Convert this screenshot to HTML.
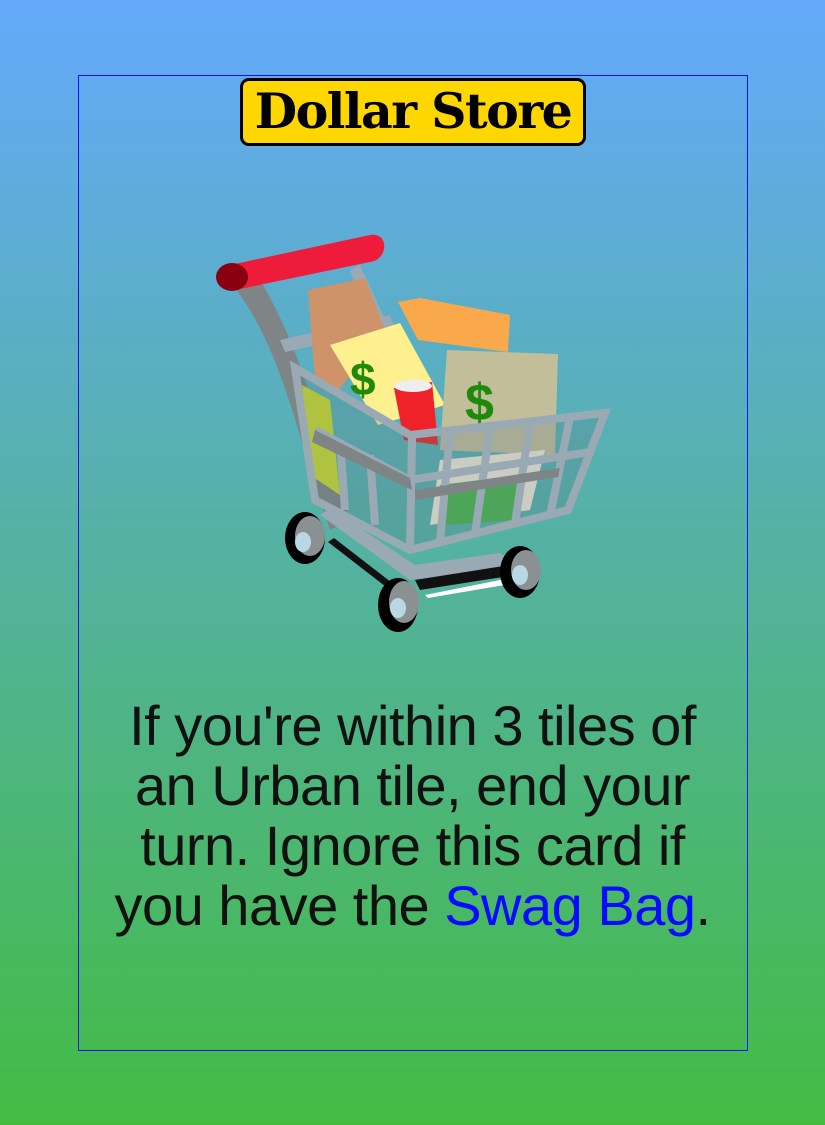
<!DOCTYPE html>
<html><head><meta charset="utf-8"><style>
html,body{margin:0;padding:0}
body{width:825px;height:1125px;background:linear-gradient(#64a9fc,#43bb43);position:relative;overflow:hidden;font-family:"Liberation Sans",sans-serif}
.card{position:absolute;left:78px;top:75px;width:670px;height:976px;border:1px solid #1010ff;box-sizing:border-box}
.title{position:absolute;left:240px;top:78px;width:346px;height:68px;box-sizing:border-box;background:#ffd700;border:3px solid #000;border-radius:9px;text-align:center;font-family:"DejaVu Serif","Liberation Serif",serif;font-weight:bold;font-size:49px;line-height:60px;letter-spacing:-1.5px;color:#000}
.txt{position:absolute;left:60px;width:705px;top:696px;text-align:center;font-size:56px;line-height:60px;letter-spacing:-0.5px;color:#111}
.txt span{color:#0a0aff}
svg{position:absolute;left:200px;top:220px}
</style></head><body>
<div class="card"></div>
<div class="title">Dollar Store</div>
<svg width="420" height="420" viewBox="0 0 420 420">
<path d="M30 62 C70 110 90 180 110 250 L130 310 L150 300 L130 240 C110 170 90 110 60 60Z" fill="#7f8486"/>
<path d="M160 45 L190 110 L172 112 L150 50Z" fill="#9aaab4"/>
<path d="M80 120 L190 95 L195 108 L85 132Z" fill="#9aaab4"/>
<path d="M108 70 L165 58 L185 110 L135 175 L115 160Z" fill="#cf936a"/>
<path d="M130 125 L200 103 L245 185 L178 205Z" fill="#fff08f"/>
<path d="M198 82 L220 78 L310 95 L308 132 L218 120Z" fill="#f9a84b"/>
<path d="M247 130 L358 134 L355 235 L240 230Z" fill="#c2be9a"/>
<path d="M194 168 L232 162 L238 225 L204 220Z" fill="#ee2228"/>
<ellipse cx="213" cy="166" rx="19" ry="6" fill="#eee"/>
<text x="150" y="175" font-family="Liberation Sans" font-weight="bold" font-size="46" fill="#1f8a0a">$</text>
<text x="265" y="200" font-family="Liberation Sans" font-weight="bold" font-size="52" fill="#1f8a0a">$</text>
<path d="M102 165 L110 255 L140 275 L130 180Z" fill="#cddc2a"/>
<path d="M240 240 L345 230 L330 290 L230 305Z" fill="#f0ead8"/>
<path d="M240 265 L320 255 L315 300 L245 305Z" fill="#47b54a"/>
<path d="M95 148 L210 215 L405 193 L368 290 L210 330 L115 280Z" fill="rgba(90,120,130,0.25)"/>
<g fill="none" stroke="#9aaab4" stroke-width="8">
<path d="M95 148 L210 215 L405 193 L368 290 L210 330 L115 280Z"/>
<path d="M115 210 L210 260 L390 232"/>
<path d="M212 218 L210 330"/>
<path d="M250 212 L240 322 M290 208 L275 314 M330 202 L315 304 M370 197 L350 296"/>
<path d="M140 220 L145 290 M170 235 L175 305"/>
</g>
<path d="M115 210 L210 258 L212 270 L112 222Z" fill="#7f8486"/>
<path d="M215 270 L360 248 L358 257 L215 280Z" fill="#7f8486"/>
<path d="M120 295 L210 360 L320 345 L300 333 L215 345 L130 288Z" fill="#9aaab4"/>
<path d="M128 322 L190 370 L196 366 L134 318Z" fill="#111"/>
<path d="M215 360 L310 345 L315 355 L220 370Z" fill="#111"/>
<path d="M225 375 L325 355 L322 362 L228 378Z" fill="#fff"/>
<g><ellipse cx="105" cy="318" rx="20" ry="26" fill="#000"/><ellipse cx="110" cy="316" rx="15" ry="20" fill="#8b9093"/><ellipse cx="103" cy="322" rx="8" ry="10" fill="#b8d8e4"/></g>
<g><ellipse cx="320" cy="352" rx="20" ry="26" fill="#000"/><ellipse cx="326" cy="350" rx="15" ry="20" fill="#8b9093"/><ellipse cx="320" cy="355" rx="8" ry="10" fill="#b8d8e4"/></g>
<g><ellipse cx="198" cy="385" rx="20" ry="27" fill="#000"/><ellipse cx="204" cy="382" rx="15" ry="21" fill="#8b9093"/><ellipse cx="198" cy="388" rx="8" ry="10" fill="#b8d8e4"/></g>
<path d="M30 45 L170 15 C190 12 188 40 170 42 L35 70Z" fill="#ee1c3a"/>
<ellipse cx="32" cy="57" rx="16" ry="14" fill="#8b0010"/>
</svg>
<div class="txt">If you're within 3 tiles of<br>an Urban tile, end your<br>turn. Ignore this card if<br>you have the <span>Swag Bag</span>.</div>
</body></html>
